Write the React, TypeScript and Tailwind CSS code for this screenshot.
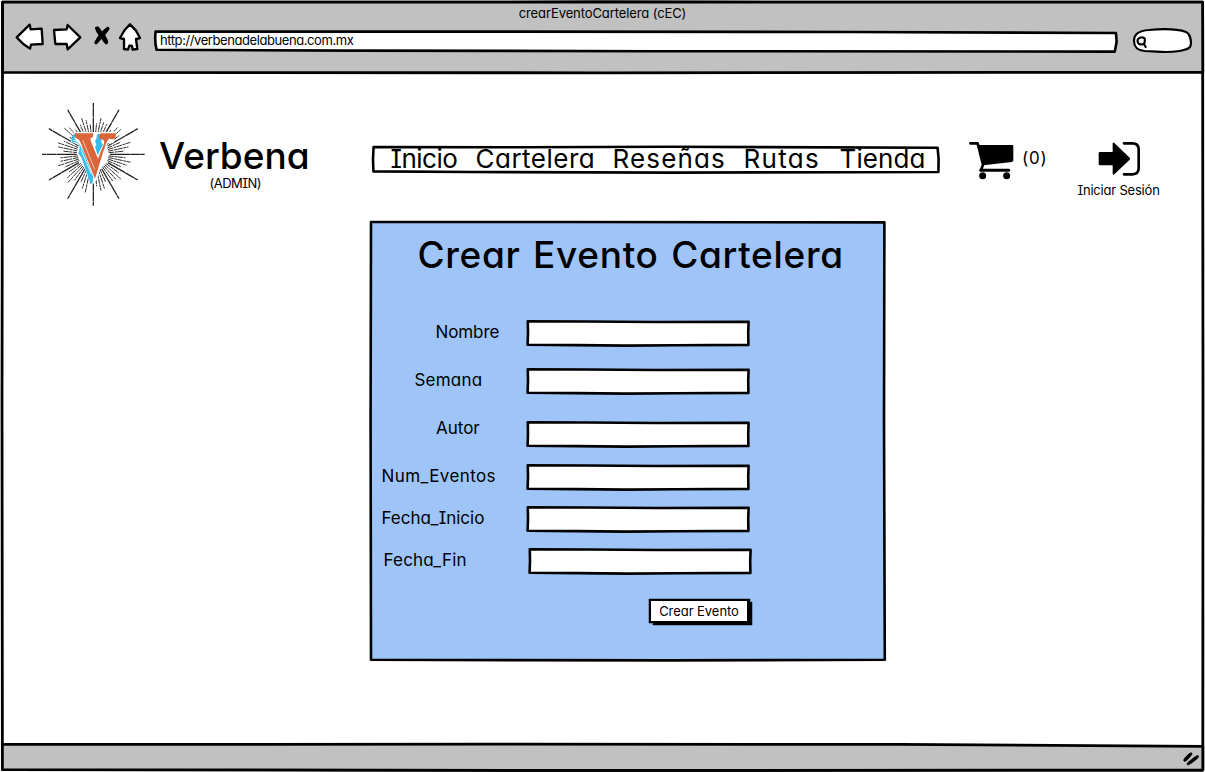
import type { ReactNode } from "react";

type BoxProps = { className: string; w: number; h: number; d: string; fill?: string; stroke?: number; children?: ReactNode };

/* A container whose outline is drawn as a slightly uneven pen stroke. */
function SketchBox({ className, w, h, d, fill = "#fff", stroke = 2.6, children }: BoxProps) {
  return (
    <div className={"relative shrink-0 " + className}>
      <svg aria-hidden="true" className="pointer-events-none absolute left-0 top-0 overflow-visible" width={w} height={h} viewBox={`0 0 ${w} ${h}`}>
        <path d={d} fill={fill} stroke="#000" strokeWidth={stroke} strokeLinejoin="round" />
      </svg>
      {children}
    </div>
  );
}

function BrowserIcons() {
  return (
    <svg aria-hidden="true" className="shrink-0" width="130" height="32" viewBox="45 66 390 96" fill="#fff" stroke="#000" strokeWidth="7" strokeLinejoin="round" strokeLinecap="round">
      <path d="M50 112 89 74 92 88 125 86 128 132 93 134 90 146 70 132Z" />
      <path d="M162 90 200 88 203 75 241 112 203 148 200 132 166 132Z" />
      <path d="M287 83c2-4 9-3 11 1l7 12 14-12c4-4 10-2 8 3-3 7-9 12-13 18 3 7 9 13 9 22 0 6-6 6-9 2l-9-14c-5 5-9 12-15 16-4 2-7-1-5-5 3-8 9-14 12-20-4-7-11-15-10-23Z" fill="#000" strokeWidth="3" />
      <path d="M390 73 408 92 420 114 408 117 412 147 398 149 396 138 388 137 384 149 372 147 372 117 360 114 374 90Z" />
    </svg>
  );
}

function SearchPill() {
  return (
    <svg aria-hidden="true" className="shrink-0" width="62" height="28" viewBox="696 84 186 84" fill="#fff" stroke="#000" strokeLinejoin="round" strokeLinecap="round">
      <path strokeWidth="6.5" d="M702 122C702 104 716 92 746 90 790 86 836 88 858 96 870 102 872 112 873 128 873 138 870 145 858 148 836 156 800 157 770 155L734 153C712 150 702 142 702 122Z" />
      <path strokeWidth="6.5" d="M714 117c6-5 15-5 20-2 1 6 1 11-1 16-5 3-13 2-17 0-4-4-4-9-2-14ZM731 131l6 10" />
    </svg>
  );
}

const rays = Array.from({ length: 60 }, (_, i) => {
  const a = (i * 6 * Math.PI) / 180;
  const long = i % 5 === 0;
  const outer = long ? 154 : [0, 88, 108, 102, 90][i % 5] + ((i * 7) % 4) * 3;
  const inner = long ? 50 : 46;
  return {
    long,
    x1: 190 + inner * Math.cos(a),
    y1: 193 + inner * Math.sin(a),
    x2: 190 + outer * Math.cos(a),
    y2: 193 + outer * Math.sin(a),
  };
});

function Logo() {
  return (
    <svg aria-hidden="true" className="shrink-0" width="110" height="110" viewBox="30 30 330 330">
      {rays.map((r, i) => (
        <line key={i} x1={r.x1} y1={r.y1} x2={r.x2} y2={r.y2} stroke="#222" strokeWidth={r.long ? 3.8 : 2.8} strokeDasharray={r.long ? "60 1 30 1" : "16 2 9 1"} />
      ))}
      <path fill="#fff" d="M132 126H260L250 160 232 160 200 270 186 286 150 205 140 190 146 165 122 155Z" />
      <path fill="#35bdec" d="M136 129C126 136 122 144 126 156L142 158C150 166 151 174 145 190L154 202 180 276 187 283 190 262 156 172 134 146Z" />
      <path fill="#35bdec" d="M203 132 214 131C212 142 216 148 214 158L219 163 203 196 195 170C204 164 194 158 196 150 202 146 198 138 203 132Z" />
      <path fill="#d9653b" d="M134 130H190L188 143C178 140 182 152 186 162L204 206 218 170C226 156 224 148 210 148 204 142 208 134 213 130H257C259 140 256 148 247 148L238 146C228 154 226 170 220 184L195 266 157 172C151 152 146 146 136 144Z" />
      <path d="M158 150 194 238" stroke="#f7d9cc" strokeWidth="2.5" fill="none" />
      <path d="M129 151C146 152 158 166 155 184L184 252" stroke="#fff" strokeWidth="2.5" fill="none" />
    </svg>
  );
}

function Cart() {
  return (
    <svg aria-hidden="true" className="shrink-0" width="45" height="40" viewBox="57 33 135 120">
      <path d="M61 40H83L99 104 93 120" fill="none" stroke="#000" strokeWidth="8" strokeLinecap="round" strokeLinejoin="round" />
      <path d="M84 45H187Q190 45 190 48V91Q190 95 186 96L100 106Z" />
      <path d="M92 121H176" stroke="#000" strokeWidth="9" strokeLinecap="round" />
      <circle cx="98" cy="137" r="10.5" />
      <circle cx="170" cy="137" r="10.5" />
    </svg>
  );
}

function Login() {
  return (
    <svg aria-hidden="true" className="shrink-0" width="42" height="36" viewBox="443 33 126 108">
      <path d="M449 66H487V40Q488 36 492 39L538 83Q541 86 538 89L492 133Q488 136 487 132V106H449Q445 106 445 102V70Q445 66 449 66Z" />
      <path d="M521 40H546Q565 40 565 58V115Q565 133 546 133H521" fill="none" stroke="#000" strokeWidth="8" strokeLinecap="round" />
    </svg>
  );
}

const inputOutline = "M1.8 1.3 60 1.5 130 2 222.6 1.7 222.2 13 222.4 24.9 150 25.3 100 25.6 50 25.1 1.6 24.8 2 13Z";

const fields = [
  { label: "Nombre", row: "h-12", text: "pl-[66.5px] tracking-[-0.1px]", input: "" },
  { label: "Semana", row: "h-12", text: "pl-[45.5px] tracking-[0.2px]", input: "" },
  { label: "Autor", row: "h-12", text: "pl-[67px]", input: "mt-[5px]" },
  { label: "Num_Eventos", row: "h-[42px]", text: "pl-[12.5px] tracking-[0.4px]", input: "" },
  { label: "Fecha_Inicio", row: "h-[42px]", text: "pl-[12.5px]", input: "" },
  { label: "Fecha_Fin", row: "h-[42px]", text: "pl-[14.5px] tracking-[0.2px]", input: "ml-[2px]" },
];

const links = [
  { label: "Inicio", style: "w-[85px] tracking-[-0.5px]" },
  { label: "Cartelera", style: "w-[137px] tracking-[0.5px]" },
  { label: "Reseñas", style: "w-[131px] tracking-[1.15px]" },
  { label: "Rutas", style: "w-[96px] tracking-[1.3px]" },
  { label: "Tienda", style: "tracking-[0.1px]" },
];

export default function App() {
  return (
    <SketchBox
      className="h-[772px] w-[1205px] overflow-hidden whitespace-nowrap font-['Inter','Lato',sans-serif] text-black [font-feature-settings:'cv11','cv08']"
      w={1205}
      h={772}
      stroke={2.8}
      d="M2.6 2.2 600 2 1202.6 2.2 1203 400 1202.8 770 600 770.4 2.4 769.6 2 400Z"
    >
      <div className="relative flex h-full flex-col">
        <SketchBox className="h-[73px]" w={1205} h={73} fill="#c1c1c1" stroke={2.8} d="M2.6 2.2 600 2 1202.6 2.2 1202.8 72.3 600 72.8 2.6 72.4Z">
          <div className="relative flex h-full flex-col">
            <div className="h-[22px] pt-[3px] text-center text-[13px] leading-5 tracking-[-0.1px]">crearEventoCartelera (cEC)</div>
            <div className="flex pl-[15px]">
              <BrowserIcons />
              <SketchBox className="ml-[8px] mt-[8px] h-[22px] w-[965px]" w={965} h={22} d="M2.6 1.6 300 1.6 700 2 963 3 963.6 12 961.8 21.6 500 21.2 200 20.6 3.6 19.8C2 14 2 7 2.6 1.6Z">
                <div className="relative pl-[7px] text-[13px] leading-5 tracking-[-0.42px]">http://verbenadelabuena.com.mx</div>
              </SketchBox>
              <div className="ml-[14px] mt-[6px]">
                <SearchPill />
              </div>
            </div>
          </div>
        </SketchBox>

        <div className="flex h-[148px] items-start">
          <div className="ml-[40px] mt-[27px]">
            <Logo />
          </div>
          <div className="ml-[9px] mt-[68px] flex w-[212px] flex-col">
            <span className="h-[34px] text-[37px] font-medium leading-[30px]">Verbena</span>
            <span className="pl-[50.5px] text-[13px] leading-4 tracking-[-0.5px]">(ADMIN)</span>
          </div>
          <SketchBox className="mt-[72px] h-[30px] w-[569px]" w={569} h={30} d="M2.6 2 150 2.2 300 1.8 566.6 2.8 567.6 14 567.4 27 300 27.6 100 27 2.4 26.4 2 14Z">
            <nav className="relative flex pl-[19.5px] pt-px text-[26px] leading-[26px]">
              {links.map((l) => (
                <a key={l.label} className={l.style}>
                  {l.label}
                </a>
              ))}
            </nav>
          </SketchBox>
          <div className="ml-[29px] mt-[68px] flex items-start">
            <Cart />
            <span className="ml-[8px] mt-[7px] text-[17px] leading-5 tracking-[0.8px]">(0)</span>
          </div>
          <div className="ml-[29px] mt-[68px] flex w-[84px] flex-col items-center">
            <Login />
            <span className="mt-[3px] text-[13px] leading-5 tracking-[-0.2px]">Iniciar Sesión</span>
          </div>
        </div>

        <SketchBox className="ml-[369px] h-[441px] w-[517px]" w={517} h={441} fill="#9fc4f8" d="M2 1 200 1 515.4 1.4 515 200 515.8 438.8 300 439.4 2 438.8 1.6 200Z">
          <form className="relative flex flex-col">
            <h1 className="h-[99px] pl-[48.5px] pt-[14px] text-[37px] font-medium leading-[40px] tracking-[0.68px] [word-spacing:2px]">Crear Evento Cartelera</h1>
            {fields.map((f) => (
              <div key={f.label} className={"flex items-start " + f.row}>
                <label className={"mt-px w-[157px] text-[17px] leading-[23px] " + f.text}>{f.label}</label>
                <SketchBox className={"h-[27px] w-[224px] " + f.input} w={224} h={27} d={inputOutline}>
                  <input className="relative block h-full w-full bg-transparent px-2 outline-none" />
                </SketchBox>
              </div>
            ))}
            <SketchBox
              className="ml-[280px] mt-[9px] h-[26px] w-[103px]"
              w={103}
              h={26}
              fill="#000"
              stroke={0.5}
              d="M0 0H101V3H103V26H4V24H0Z"
            >
              <button type="button" className="relative ml-[2px] mt-[2px] block h-[20px] w-[96px] bg-white text-center text-[13px] leading-[19px] tracking-[-0.05px]">
                Crear Evento
              </button>
            </SketchBox>
          </form>
        </SketchBox>

        <SketchBox className="mt-auto h-[29px]" w={1205} h={29} fill="#c1c1c1" stroke={2.8} d="M2.4 1.4 500 1.2 900 1.4 1202.8 3.4 1202.8 27 600 27.4 2.4 26.6Z">
          <div className="relative flex h-full items-center justify-end pr-[6px]">
            <svg aria-hidden="true" className="mt-[2px]" width="16" height="14" viewBox="249 67 48 42" stroke="#000" strokeWidth="2">
              <path d="M275 70c4 2-2 8-7 14s-12 12-15 11c-5-2 0-9 6-15s12-12 16-10ZM295 78c4 3-4 10-12 16s-18 14-21 11c-3-4 4-9 13-16s16-13 20-11Z" />
            </svg>
          </div>
        </SketchBox>
      </div>
    </SketchBox>
  );
}
